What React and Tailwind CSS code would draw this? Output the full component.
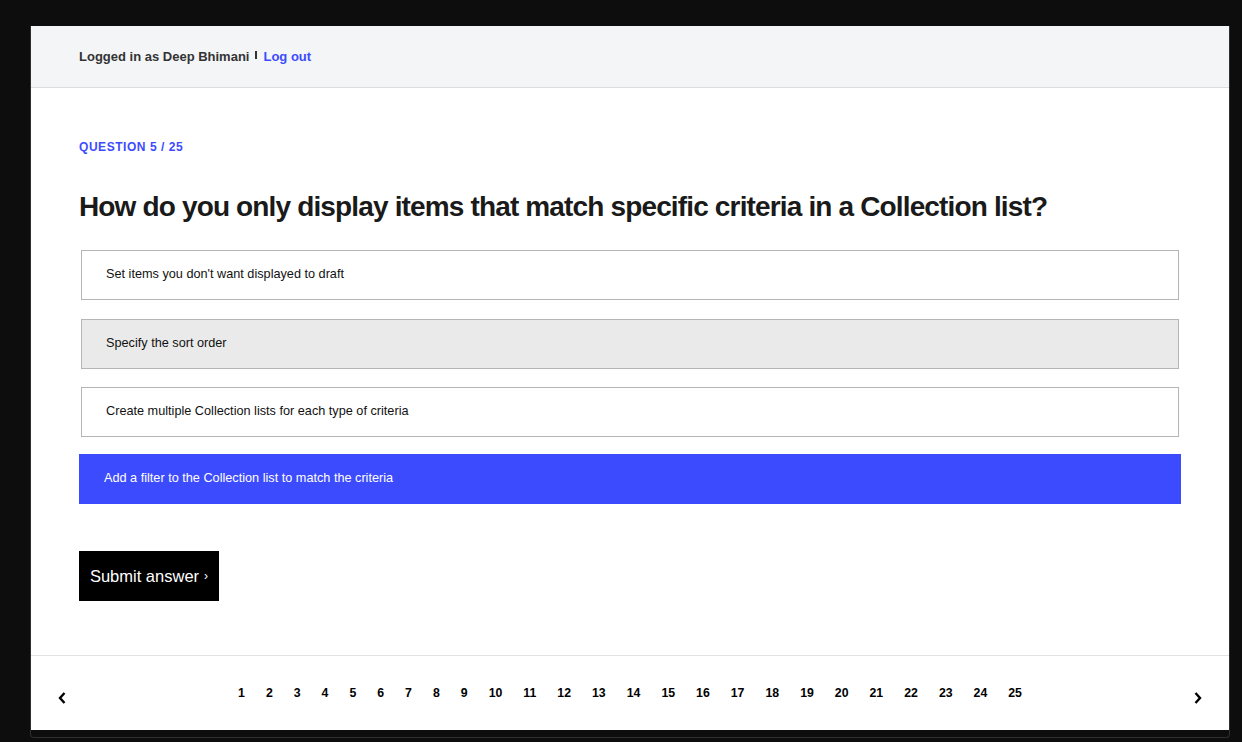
import { useState } from 'react'

const OPTIONS = [
  "Set items you don't want displayed to draft",
  'Specify the sort order',
  'Create multiple Collection lists for each type of criteria',
  'Add a filter to the Collection list to match the criteria',
]

// spacing under each option, matches the uneven gaps of the original
const OPTION_GAPS = ['mb-[19px]', 'mb-[18px]', 'mb-[17px]', '']

const PAGES = Array.from({ length: 25 }, (_, i) => i + 1)

export default function App() {
  const [hovered] = useState(1)
  const [selected, setSelected] = useState(3)

  return (
    <div className="min-h-[742px] w-[1242px] bg-[#0d0d0d] pt-[26px] pl-[30px] font-['Liberation_Sans',Arial,sans-serif]">
      <div className="w-[1200px] rounded-b-[4px] border-x border-b border-[#2e2e2e] pb-[7px]">
        <div className="bg-white">
          {/* Top bar */}
          <div className="flex h-[62px] items-center border-b border-[#dcdcdc] bg-[#f4f5f7] pl-[48px] text-[13px] font-bold">
            <span className="text-[#333333]">Logged in as Deep Bhimani</span>
            <span className="mx-[6px] inline-block h-[8px] w-[2px] -translate-y-[2px] bg-[#333333]" />
            <a href="#" className="text-[#3d4bff]">Log out</a>
          </div>

          {/* Question */}
          <div className="px-[48px] pt-[51px] pb-[54px]">
            <p className="text-[12px] leading-[16px] font-bold tracking-[0.55px] text-[#3d4bff]">QUESTION 5 / 25</p>
            <h1 className="mt-[35px] text-[28px] leading-[34px] font-bold tracking-[-0.85px] text-[#1a1a1a]">
              How do you only display items that match specific criteria in a Collection list?
            </h1>

            <div className="mt-[26px] flex flex-col">
              {OPTIONS.map((opt, i) => {
                const isSel = i === selected
                const isHover = i === hovered
                return (
                  <button
                    key={opt}
                    onClick={() => setSelected(i)}
                    className={`flex h-[50px] items-center text-left text-[12.7px] ${OPTION_GAPS[i]} ${
                      isSel
                        ? 'bg-[#3d4bff] pl-[25px] text-white'
                        : `mx-[2px] border border-[#b5b5b5] pl-[24px] text-[#111111] ${isHover ? 'bg-[#eaeaea]' : 'bg-white'}`
                    }`}
                  >
                    {opt}
                  </button>
                )
              })}
            </div>

            <button className="mt-[47px] flex h-[50px] w-[140px] items-center justify-center bg-black text-[16.5px] text-white">
              Submit answer<span className="ml-[5px] text-[12px]">›</span>
            </button>
          </div>

          {/* Pagination */}
          <div className="flex h-[75px] items-center border-t border-[#e2e2e2] px-[26px]">
            <button className="mt-[10px] flex h-[14px] w-[10px] items-center justify-center text-black">
              <svg viewBox="0 0 8 12" className="h-[12px] w-[8px]">
                <polyline points="6.5,1 2,6 6.5,11" fill="none" stroke="currentColor" strokeWidth="2.4" />
              </svg>
            </button>
            <div className="flex flex-1 justify-center gap-[21px] text-[12.3px] font-bold text-black">
              {PAGES.map((p) => (
                <span key={p}>{p}</span>
              ))}
            </div>
            <button className="mt-[10px] flex h-[14px] w-[10px] items-center justify-center text-black">
              <svg viewBox="0 0 8 12" className="h-[12px] w-[8px]">
                <polyline points="1.5,1 6,6 1.5,11" fill="none" stroke="currentColor" strokeWidth="2.4" />
              </svg>
            </button>
          </div>
        </div>
      </div>
    </div>
  )
}
